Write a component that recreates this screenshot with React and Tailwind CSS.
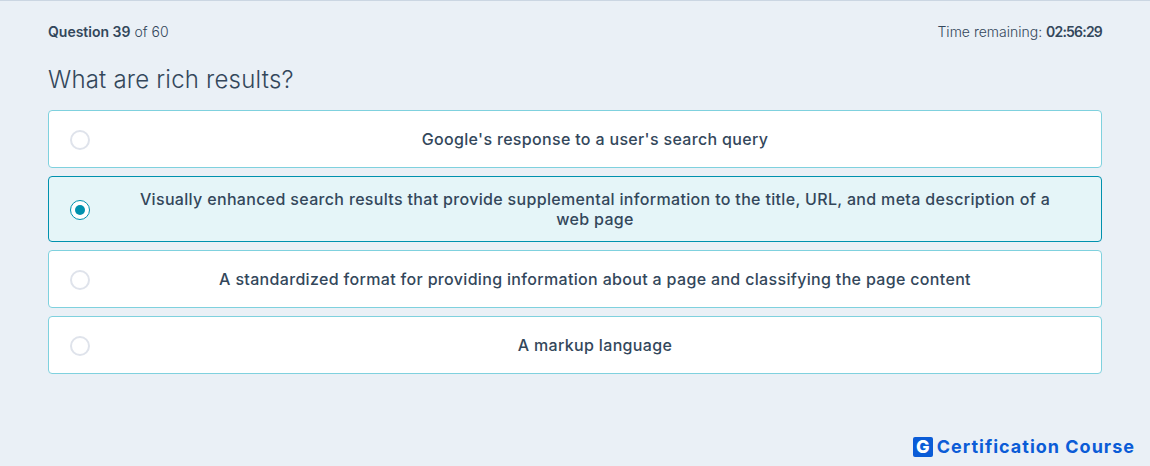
import React from "react";

const answers = [
  { id: 1, text: "Google's response to a user's search query" },
  { id: 2, text: "Visually enhanced search results that provide supplemental information to the title, URL, and meta description of a web page", selected: true },
  { id: 3, text: "A standardized format for providing information about a page and classifying the page content" },
  { id: 4, text: "A markup language" },
];

function Answer({ text, selected }) {
  return (
    <div
      className={
        selected
          ? "flex items-center rounded border border-[#0091ae] bg-[#e5f5f8] py-[12px] px-[21px]"
          : "flex items-center rounded border border-[#7fd1de] bg-white py-[18px] px-[21px]"
      }
    >
      {selected ? (
        <div className="mt-px -mb-px flex h-5 w-5 shrink-0 items-center justify-center rounded-full border border-[#0091ae] bg-white">
          <div className="h-[10px] w-[10px] rounded-full bg-[#0091ae]" />
        </div>
      ) : (
        <div className="mt-px -mb-px h-5 w-5 shrink-0 rounded-full border-2 border-[#dfe3eb] bg-white" />
      )}
      <div className="flex-1 pl-[40px] pr-[20px] text-center text-[16px] leading-[20px] font-medium tracking-[0.33px] text-[#33475b]">{text}</div>
    </div>
  );
}

export default function App() {
  return (
    <div className="flex h-[466px] flex-col overflow-hidden border-t border-[#cbd6e2] bg-[#eaf0f6] font-['Inter','Liberation_Sans',sans-serif] text-[#33475b]">
      <div className="px-[48px]">
        <div className="flex items-center justify-between pt-[22px] text-[14px] leading-[18px] font-light">
          <div>
            <span className="font-semibold">Question 39</span> of 60
          </div>
          <div>
            Time remaining: <span className="font-semibold tracking-[-0.8px]">02:56:29</span>
          </div>
        </div>
        <h1 className="mt-[23px] text-[24px] leading-[32px] font-light tracking-[0.2px]">What are rich results?</h1>
        <div className="mt-[14px] flex flex-col gap-2">
          {answers.map((answer) => (
            <Answer key={answer.id} text={answer.text} selected={answer.selected} />
          ))}
        </div>
      </div>
      <div className="mt-auto flex items-center justify-end gap-[4px] pr-[15px] pb-[9px]">
        <div className="flex h-5 w-5 items-center justify-center rounded-[2px] bg-[#0b5cd7] text-[18px] leading-none font-extrabold text-white">G</div>
        <div className="text-[18px] leading-[20px] font-bold tracking-[1px] text-[#0b5cd7]">Certification Course</div>
      </div>
    </div>
  );
}
